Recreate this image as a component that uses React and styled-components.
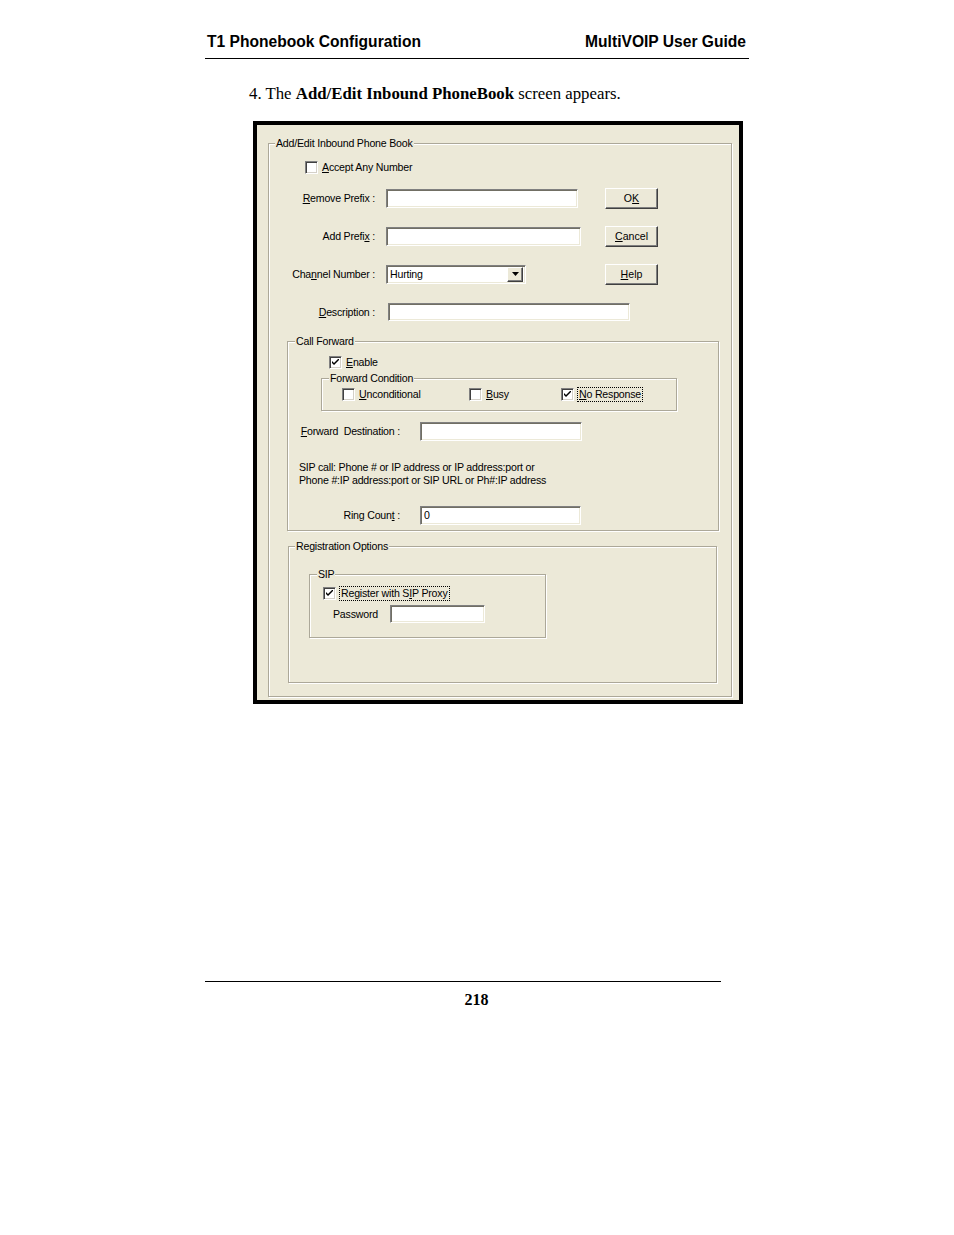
import React from "react";
import styled, { createGlobalStyle } from "styled-components";

const GlobalStyle = createGlobalStyle`
  html, body { margin: 0; padding: 0; background: #fff; }
  body { font-family: "Liberation Serif", serif; color: #000; }
`;

const Page = styled.div`
  width: 954px;
  height: 1235px;
  overflow: hidden;
`;

const RunningHead = styled.header`
  margin-left: 205px;
  width: 544px;
  padding: 33px 3px 7px 2px;
  box-sizing: border-box;
  display: flex;
  justify-content: space-between;
  border-bottom: 1px solid #000;
  font: bold 15.6px/18px "Liberation Sans", Arial, sans-serif;
`;

const Intro = styled.p`
  margin: 25px 0 0 249px;
  font-size: 16.8px;
  line-height: 20px;
`;

const Dialog = styled.div`
  margin: 17px 0 0 253px;
  width: 490px;
  height: 583px;
  box-sizing: border-box;
  border: 4px solid #000;
  background: #ece9d8;
  padding: 18px 0 0 11px;
  font: 10.6px/13px "Liberation Sans", Arial, sans-serif;
  letter-spacing: -0.2px;
  color: #000;
`;

const GroupBox = styled.div`
  position: relative;
  box-sizing: border-box;
  width: ${(p) => p.$w}px;
  height: ${(p) => p.$h}px;
  margin: ${(p) => p.$mt || 0}px 0 0 ${(p) => p.$ml || 0}px;
  padding-top: ${(p) => p.$pt || 0}px;
  border: 1px solid #aca899;
  box-shadow: 1px 1px 0 #fff, inset 1px 1px 0 #fff;
`;

const Legend = styled.span`
  position: absolute;
  top: -7px;
  left: ${(p) => p.$x}px;
  padding: 0 1px;
  background: #ece9d8;
  white-space: nowrap;
`;

const U = styled.span`
  text-decoration: underline;
`;

const CheckRow = styled.label`
  display: flex;
  align-items: center;
  gap: 4px;
  height: ${(p) => p.$h || 16}px;
  margin-left: ${(p) => p.$ml || 0}px;
  white-space: nowrap;
`;

const Box = styled.span`
  width: 13px;
  height: 13px;
  box-sizing: border-box;
  flex: none;
  background: #fff;
  border: 1px solid;
  border-color: #808080 #fff #fff #808080;
  box-shadow: inset 1px 1px 0 #404040, inset -1px -1px 0 #d4d0c8;
  display: flex;
  align-items: center;
  justify-content: center;
`;

const Focus = styled.span`
  outline: 1px dotted #000;
  outline-offset: 0;
  padding: 0 1px;
`;

const CheckBox = ({ checked }) => (
  <Box>
    {checked && (
      <svg width="7" height="7" viewBox="0 0 7 7">
        <path d="M0 2 L0 4 L2 6 L7 1 L7 -1 L2 4 Z" fill="#000" />
      </svg>
    )}
  </Box>
);

const FieldGrid = styled.div`
  display: grid;
  grid-template-columns: 106px 208px 53px;
  column-gap: 11px;
  grid-auto-rows: 38px;
  align-items: center;
`;

const FieldLabel = styled.span`
  text-align: right;
  white-space: nowrap;
`;

const TextBox = styled.div`
  width: ${(p) => p.$w}px;
  height: ${(p) => p.$h || 19}px;
  margin-left: ${(p) => p.$ml || 0}px;
  grid-column: ${(p) => p.$span || "auto"};
  box-sizing: border-box;
  background: #fff;
  border: 1px solid;
  border-color: #808080 #fff #fff #808080;
  box-shadow: inset 1px 1px 0 #716f64, inset -1px -1px 0 #ece9d8;
  padding: 0 3px;
  display: flex;
  align-items: center;
`;

const SelectBox = styled(TextBox)`
  justify-content: space-between;
  padding: 2px 2px 2px 3px;
`;

const DropButton = styled.span`
  width: 16px;
  height: 15px;
  box-sizing: border-box;
  background: #ece9d8;
  border: 1px solid;
  border-color: #fff #404040 #404040 #fff;
  box-shadow: inset -1px -1px 0 #808080;
  display: flex;
  align-items: center;
  justify-content: center;
`;

const Button = styled.button`
  width: 53px;
  height: 21px;
  padding: 0;
  box-sizing: border-box;
  background: #ece9d8;
  border: 1px solid;
  border-color: #fff #404040 #404040 #fff;
  box-shadow: inset -1px -1px 0 #808080;
  font: inherit;
  color: #000;
`;

const Row = styled.div`
  display: grid;
  grid-template-columns: ${(p) => p.$cols};
  column-gap: ${(p) => p.$gap || 0}px;
  align-items: center;
  height: ${(p) => p.$h}px;
  margin: ${(p) => p.$mt || 0}px 0 0 ${(p) => p.$ml || 0}px;
`;

const Note = styled.p`
  margin: 18px 0 0 11px;
  line-height: 13px;
`;

const Footer = styled.footer`
  margin: 277px 0 0 205px;
  width: 516px;
  border-top: 1px solid #000;
  padding-top: 9px;
  text-align: center;
  font: bold 16px/18px "Liberation Serif", serif;
  box-sizing: border-box;
  padding-left: 27px;
`;

export default function App() {
  return (
    <Page>
      <GlobalStyle />
      <RunningHead>
        <span>T1 Phonebook Configuration</span>
        <span>MultiVOIP User Guide</span>
      </RunningHead>
      <Intro>
        4. The <b>Add/Edit Inbound PhoneBook</b> screen appears.
      </Intro>

      <Dialog>
        <GroupBox $w={464} $h={554} $pt={12}>
          <Legend $x={6}>Add/Edit Inbound Phone Book</Legend>
          <CheckRow $ml={36} $h={23}>
            <CheckBox />
            <span><U>A</U>ccept Any Number</span>
          </CheckRow>

          <FieldGrid>
            <FieldLabel><U>R</U>emove Prefix :</FieldLabel>
            <TextBox $w={192} />
            <Button>O<U>K</U></Button>

            <FieldLabel>Add Prefi<U>x</U> :</FieldLabel>
            <TextBox $w={195} />
            <Button><U>C</U>ancel</Button>

            <FieldLabel>Cha<U>n</U>nel Number :</FieldLabel>
            <SelectBox $w={140}>
              <span>Hurting</span>
              <DropButton>
                <svg width="7" height="4" viewBox="0 0 7 4">
                  <path d="M0 0 H7 L3.5 4 Z" fill="#000" />
                </svg>
              </DropButton>
            </SelectBox>
            <Button><U>H</U>elp</Button>

            <FieldLabel><U>D</U>escription :</FieldLabel>
            <TextBox $w={242} $h={18} $ml={2} $span="2 / 4" />
          </FieldGrid>

          <GroupBox $w={432} $h={190} $mt={10} $ml={18} $pt={12}>
            <Legend $x={7}>Call Forward</Legend>
            <CheckRow $ml={41}>
              <CheckBox checked />
              <span><U>E</U>nable</span>
            </CheckRow>

            <GroupBox $w={356} $h={33} $mt={8} $ml={33} $pt={7}>
              <Legend $x={7}>Forward Condition</Legend>
              <Row $cols="127px 92px auto" $h={16} $ml={20}>
                <CheckRow>
                  <CheckBox />
                  <span><U>U</U>nconditional</span>
                </CheckRow>
                <CheckRow>
                  <CheckBox />
                  <span><U>B</U>usy</span>
                </CheckRow>
                <CheckRow>
                  <CheckBox checked />
                  <Focus><U>N</U>o Response</Focus>
                </CheckRow>
              </Row>
            </GroupBox>

            <Row $cols="112px auto" $gap={20} $h={23} $mt={9}>
              <FieldLabel><U>F</U>orward&nbsp; Destination :</FieldLabel>
              <TextBox $w={162} />
            </Row>

            <Note>
              SIP call: Phone # or IP address or IP address:port or
              <br />
              Phone #:IP address:port or SIP URL or Ph#:IP address
            </Note>

            <Row $cols="112px auto" $gap={20} $h={23} $mt={17}>
              <FieldLabel>Ring Coun<U>t</U> :</FieldLabel>
              <TextBox $w={161}>0</TextBox>
            </Row>
          </GroupBox>

          <GroupBox $w={429} $h={137} $mt={15} $ml={19}>
            <Legend $x={6}>Registration Options</Legend>
            <GroupBox $w={237} $h={64} $mt={27} $ml={20} $pt={10}>
              <Legend $x={7}>SIP</Legend>
              <CheckRow $ml={13} $h={17}>
                <CheckBox checked />
                <Focus>Register with S<U>I</U>P Proxy</Focus>
              </CheckRow>
              <Row $cols="57px auto" $h={24} $ml={23}>
                <span>Password</span>
                <TextBox $w={95} $h={18} />
              </Row>
            </GroupBox>
          </GroupBox>
        </GroupBox>
      </Dialog>

      <Footer>218</Footer>
    </Page>
  );
}
